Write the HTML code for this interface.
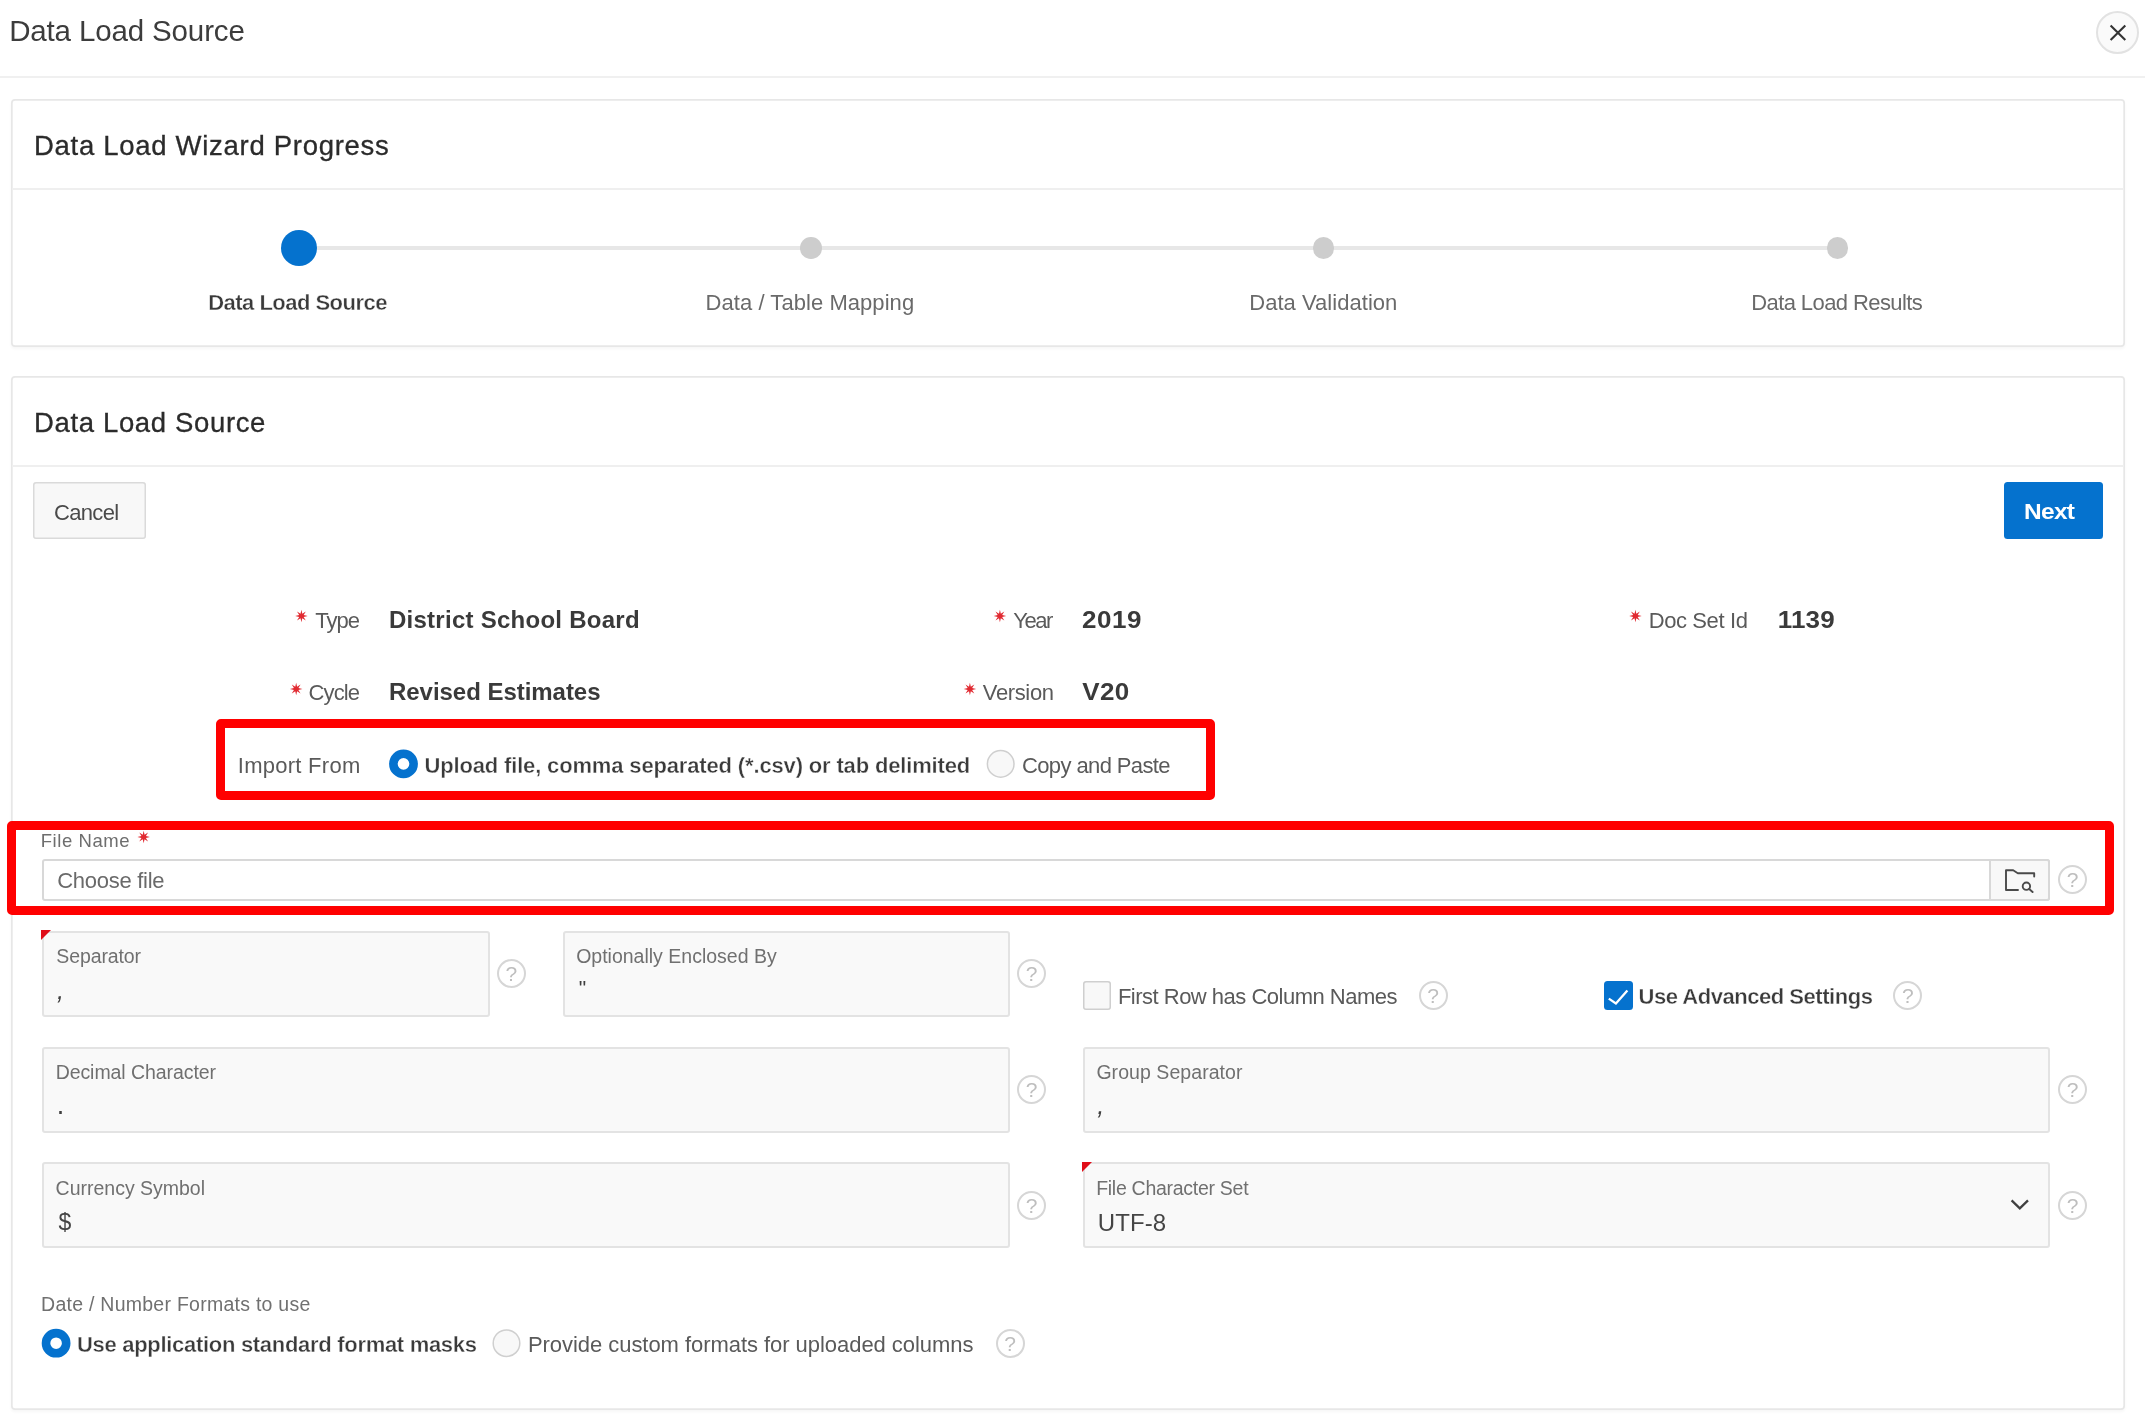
<!DOCTYPE html>
<html lang="en">
<head>
<meta charset="utf-8">
<title>Data Load Source</title>
<style>
html,body{margin:0;padding:0;background:#fff;}
body{width:2145px;height:1423px;position:relative;overflow:hidden;font-family:"Liberation Sans",sans-serif;}
.t{position:absolute;margin:0;padding:0;white-space:pre;line-height:1;font-family:"Liberation Sans",sans-serif;}
.abs{position:absolute;box-sizing:border-box;}
.card{position:absolute;box-sizing:border-box;left:10.8px;width:2114.4px;border-radius:4px;background:#fff;box-shadow:inset 0 0 0 1.7px #e7e7e7,0 2px 3px rgba(0,0,0,.035);}
.hr{position:absolute;left:12px;width:2112px;height:2px;background:#efefef;}
.dot{position:absolute;width:21.6px;height:21.6px;border-radius:50%;background:#cdcdcd;}
.fld{position:absolute;box-sizing:border-box;height:86px;border:2px solid #e3e3e3;border-radius:3px;background:#f9f9f9;}
.help{position:absolute;box-sizing:border-box;width:29px;height:29px;border-radius:50%;border:2px solid #d6d6d6;background:#fff;color:#bebebe;font-size:21px;line-height:26.5px;text-align:center;}
.red{position:absolute;box-sizing:border-box;border:9px solid #ff0000;border-radius:5px;}
.red i{position:absolute;left:-1px;top:-1px;right:-1px;bottom:-1px;border:1px solid #ff0000;}
.corner{position:absolute;width:0;height:0;border-top:10.5px solid #e00d18;border-right:10.5px solid transparent;}
</style>
</head>
<body>
<div id="page" style="position:absolute;left:0;top:0;width:2145px;height:1423px;will-change:transform">
<!-- dialog title bar -->
<div class="abs" style="left:0;top:75.8px;width:2145px;height:2px;background:#f0f0f0"></div>
<div class="abs" style="left:2096.3px;top:11.1px;width:43px;height:43px;border-radius:50%;border:2px solid #e2e2e2;background:#fafafa"></div>
<svg class="abs" style="left:2108px;top:23px" width="20" height="20" viewBox="0 0 20 20"><path d="M2.6 2.4 L17.3 17.1 M17.3 2.4 L2.6 17.1" stroke="#333" stroke-width="2.1" fill="none" stroke-linecap="butt"/></svg>

<!-- card 1 : wizard progress -->
<div class="card" style="top:99.2px;height:248.3px"></div>
<div class="hr" style="top:188px"></div>
<div class="abs" style="left:298px;top:246px;width:1539px;height:3.6px;background:#e7e7e7"></div>
<div class="abs" style="left:280.7px;top:229.7px;width:36.3px;height:36.3px;border-radius:50%;background:#0572ce"></div>
<div class="dot" style="left:800.3px;top:237.2px"></div>
<div class="dot" style="left:1312.5px;top:237.2px"></div>
<div class="dot" style="left:1826.6px;top:237.2px"></div>

<!-- card 2 : data load source -->
<div class="card" style="top:376.2px;height:1034px"></div>
<div class="hr" style="top:465px"></div>

<!-- buttons -->
<div class="abs" style="left:33px;top:482px;width:113px;height:57px;box-shadow:inset 0 0 0 1.5px #dadada;border-radius:3px;background:#f8f8f8"></div>
<div class="abs" style="left:2004px;top:481.6px;width:99.2px;height:57.6px;border-radius:3.5px;background:#0572ce"></div>

<!-- import-from radios -->
<svg class="abs" style="left:386px;top:746px" width="34" height="34" viewBox="0 0 34 34"><circle cx="17.5" cy="17.9" r="10.1" fill="none" stroke="#0572ce" stroke-width="8.6"/></svg>
<svg class="abs" style="left:983px;top:746px" width="34" height="34" viewBox="0 0 34 34"><circle cx="17.7" cy="17.9" r="13.3" fill="#f8f8f8" stroke="#cfcfcf" stroke-width="1.5"/></svg>

<!-- file name input -->
<div class="abs" style="left:42px;top:858.6px;width:2008px;height:42.6px;border:2px solid #d8d8d8;border-radius:3px;background:#fff"></div>
<div class="abs" style="left:1989.4px;top:858.6px;width:60.6px;height:42.6px;border:2px solid #d8d8d8;border-radius:0 3px 3px 0;background:#f8f8f8"></div>
<svg class="abs" style="left:2002px;top:866px" width="36" height="30" viewBox="0 0 36 30"><g fill="none" stroke="#4a4a4a" stroke-width="1.9" stroke-linejoin="round" stroke-linecap="round"><path d="M16 24 H4 V4.3 H11.2 L15.8 7.2 H32.2 V10.6"/><circle cx="24.4" cy="20.2" r="3.7"/><path d="M27.2 23 L30.6 26"/></g></svg>
<div class="help" style="left:2058.1px;top:865.2px">?</div>

<!-- row: separator / enclosed by / checkboxes -->
<div class="fld" style="left:42px;top:930.6px;width:448.2px"></div>
<div class="corner" style="left:41.4px;top:930px"></div>
<div class="help" style="left:496.8px;top:959.2px">?</div>
<div class="fld" style="left:563.2px;top:930.6px;width:446.6px"></div>
<div class="help" style="left:1017.1px;top:959.2px">?</div>
<div class="abs" style="left:1083px;top:981px;width:28px;height:29px;box-shadow:inset 0 0 0 1.5px #cfcfcf;border-radius:3px;background:#f8f8f8"></div>
<div class="help" style="left:1418.7px;top:981px">?</div>
<div class="abs" style="left:1603.9px;top:981.2px;width:29px;height:28.8px;border-radius:3.5px;background:#0572ce"></div>
<svg class="abs" style="left:1603.9px;top:981.2px" width="29" height="29" viewBox="0 0 29 29"><path d="M4.8 17.6 L11.9 22.4 L23.4 9.6" fill="none" stroke="#fff" stroke-width="2.3" stroke-linecap="butt" stroke-linejoin="miter"/></svg>
<div class="help" style="left:1893.4px;top:981px">?</div>

<!-- row: decimal / group -->
<div class="fld" style="left:42px;top:1047.4px;width:967.8px"></div>
<div class="help" style="left:1017.1px;top:1075.3px">?</div>
<div class="fld" style="left:1082.7px;top:1047.4px;width:967.6px"></div>
<div class="help" style="left:2058.1px;top:1075.3px">?</div>

<!-- row: currency / charset -->
<div class="fld" style="left:42px;top:1162.4px;width:967.8px"></div>
<div class="help" style="left:1017.1px;top:1190.9px">?</div>
<div class="fld" style="left:1082.7px;top:1162.4px;width:967.6px"></div>
<div class="corner" style="left:1082.1px;top:1161.8px"></div>
<svg class="abs" style="left:2008px;top:1196px" width="24" height="16" viewBox="0 0 24 16"><path d="M3.6 4.4 L11.8 12.4 L20 4.4" fill="none" stroke="#404040" stroke-width="2.3" stroke-linecap="butt" stroke-linejoin="miter"/></svg>
<div class="help" style="left:2058.1px;top:1190.9px">?</div>

<!-- date/number radios -->
<svg class="abs" style="left:39px;top:1326px" width="34" height="34" viewBox="0 0 34 34"><circle cx="17.1" cy="17.2" r="10.1" fill="none" stroke="#0572ce" stroke-width="8.6"/></svg>
<svg class="abs" style="left:489px;top:1326px" width="34" height="34" viewBox="0 0 34 34"><circle cx="17.5" cy="17.2" r="13.3" fill="#f8f8f8" stroke="#cfcfcf" stroke-width="1.5"/></svg>
<div class="help" style="left:995.5px;top:1328.7px">?</div>

<!-- red highlight boxes -->
<div class="red" style="left:216px;top:719px;width:999.2px;height:81px"></div>
<div class="red" style="left:7px;top:821px;width:2107px;height:94px"></div>

<!-- text -->
<h1 class="t" style="left:9.13px;top:16px;font-size:29.5px;font-weight:400;color:#3c3c3c;letter-spacing:-0.139px;">Data Load Source</h1>
<h2 class="t" style="left:33.98px;top:132px;font-size:27.5px;font-weight:400;color:#2b2b2b;letter-spacing:0.711px;-webkit-text-stroke:0.3px #2b2b2b;">Data Load Wizard Progress</h2>
<span class="t" style="left:208.20px;top:292px;font-size:22px;font-weight:700;color:#3a3a3a;letter-spacing:-0.518px;-webkit-text-stroke:0.35px #fff;">Data Load Source</span>
<span class="t" style="left:705.53px;top:292px;font-size:22px;font-weight:400;color:#6a6a6a;letter-spacing:0.059px;">Data / Table Mapping</span>
<span class="t" style="left:1249.23px;top:292px;font-size:22px;font-weight:400;color:#6a6a6a;letter-spacing:0.039px;">Data Validation</span>
<span class="t" style="left:1751.23px;top:292px;font-size:22px;font-weight:400;color:#6a6a6a;letter-spacing:-0.589px;">Data Load Results</span>
<h2 class="t" style="left:33.98px;top:409px;font-size:27.5px;font-weight:400;color:#2b2b2b;letter-spacing:0.649px;-webkit-text-stroke:0.3px #2b2b2b;">Data Load Source</h2>
<span class="t" style="left:53.97px;top:502px;font-size:22px;font-weight:400;color:#4a4a4a;letter-spacing:-0.667px;">Cancel</span>
<span class="t" style="left:2024.04px;top:499px;font-size:24.5px;font-weight:700;color:#ffffff;letter-spacing:-0.708px;transform-origin:0 20px;transform:scaleY(0.9007);">Next</span>
<label class="t" style="left:315.27px;top:610px;font-size:22px;font-weight:400;color:#5a5a5a;letter-spacing:-0.958px;">Type</label>
<span class="t" style="left:388.97px;top:608px;font-size:24px;font-weight:700;color:#3a3a3a;letter-spacing:0.264px;">District School Board</span>
<label class="t" style="left:1013.23px;top:610px;font-size:22px;font-weight:400;color:#5a5a5a;letter-spacing:-1.434px;">Year</label>
<span class="t" style="left:1082.07px;top:606px;font-size:26px;font-weight:700;color:#3a3a3a;letter-spacing:0.520px;transform-origin:0 22px;transform:scaleY(0.9132);">2019</span>
<label class="t" style="left:1648.63px;top:610px;font-size:22px;font-weight:400;color:#5a5a5a;letter-spacing:-0.384px;">Doc Set Id</label>
<span class="t" style="left:1777.74px;top:606px;font-size:26px;font-weight:700;color:#3a3a3a;letter-spacing:0.196px;transform-origin:0 22px;transform:scaleY(0.9132);">1139</span>
<label class="t" style="left:308.57px;top:682px;font-size:22px;font-weight:400;color:#5a5a5a;letter-spacing:-0.910px;">Cycle</label>
<span class="t" style="left:388.97px;top:680px;font-size:24px;font-weight:700;color:#3a3a3a;letter-spacing:-0.035px;">Revised Estimates</span>
<label class="t" style="left:982.84px;top:682px;font-size:22px;font-weight:400;color:#5a5a5a;letter-spacing:-0.369px;">Version</label>
<span class="t" style="left:1082.19px;top:678px;font-size:26px;font-weight:700;color:#3a3a3a;letter-spacing:0.441px;transform-origin:0 22px;transform:scaleY(0.9132);">V20</span>
<label class="t" style="left:237.79px;top:755px;font-size:22px;font-weight:400;color:#5a5a5a;letter-spacing:0.265px;">Import From</label>
<span class="t" style="left:424.42px;top:755px;font-size:22px;font-weight:700;color:#3a3a3a;letter-spacing:-0.153px;-webkit-text-stroke:0.35px #fff;">Upload file, comma separated (*.csv) or tab delimited</span>
<label class="t" style="left:1021.97px;top:755px;font-size:22px;font-weight:400;color:#5a5a5a;letter-spacing:-0.611px;">Copy and Paste</label>
<label class="t" style="left:40.76px;top:832px;font-size:18.5px;font-weight:400;color:#6e6e6e;letter-spacing:0.554px;">File Name</label>
<span class="t" style="left:57.27px;top:870px;font-size:22px;font-weight:400;color:#6a6a6a;letter-spacing:-0.282px;">Choose file</span>
<label class="t" style="left:56.36px;top:947px;font-size:19.5px;font-weight:400;color:#707070;letter-spacing:-0.129px;">Separator</label>
<label class="t" style="left:576.13px;top:947px;font-size:19.5px;font-weight:400;color:#707070;letter-spacing:0.004px;">Optionally Enclosed By</label>
<label class="t" style="left:1117.93px;top:986px;font-size:22px;font-weight:400;color:#5a5a5a;letter-spacing:-0.506px;">First Row has Column Names</label>
<span class="t" style="left:1638.52px;top:986px;font-size:22px;font-weight:700;color:#3a3a3a;letter-spacing:-0.467px;-webkit-text-stroke:0.35px #fff;">Use Advanced Settings</span>
<label class="t" style="left:55.67px;top:1063px;font-size:19.5px;font-weight:400;color:#707070;letter-spacing:-0.070px;">Decimal Character</label>
<label class="t" style="left:1096.39px;top:1063px;font-size:19.5px;font-weight:400;color:#707070;letter-spacing:0.061px;">Group Separator</label>
<label class="t" style="left:55.59px;top:1179px;font-size:19.5px;font-weight:400;color:#707070;letter-spacing:-0.008px;">Currency Symbol</label>
<label class="t" style="left:1096.17px;top:1179px;font-size:19.5px;font-weight:400;color:#707070;letter-spacing:-0.279px;">File Character Set</label>
<span class="t" style="left:1097.69px;top:1211px;font-size:24px;font-weight:400;color:#454545;letter-spacing:0.116px;">UTF-8</span>
<span class="t" style="left:58.52px;top:1211px;font-size:23px;font-weight:400;color:#454545;letter-spacing:0.000px;">$</span>
<label class="t" style="left:41.07px;top:1295px;font-size:19.5px;font-weight:400;color:#707070;letter-spacing:0.259px;">Date / Number Formats to use</label>
<span class="t" style="left:77.02px;top:1334px;font-size:22px;font-weight:700;color:#3a3a3a;letter-spacing:-0.301px;-webkit-text-stroke:0.35px #fff;">Use application standard format masks</span>
<label class="t" style="left:527.93px;top:1334px;font-size:22px;font-weight:400;color:#5a5a5a;letter-spacing:-0.048px;">Provide custom formats for uploaded columns</label>
<span class="t" style="left:56.9px;top:978px;font-family:'Liberation Sans',sans-serif;font-size:25px;font-weight:400;color:#3f3f3f;font-style:italic;">,</span>
<span class="t" style="left:578.8px;top:977px;font-family:'Liberation Sans',sans-serif;font-size:21px;font-weight:400;color:#3f3f3f;">&quot;</span>
<span class="t" style="left:56.7px;top:1092px;font-family:'Liberation Sans',sans-serif;font-size:27px;font-weight:400;color:#3f3f3f;">.</span>
<span class="t" style="left:1097.3px;top:1093px;font-family:'Liberation Sans',sans-serif;font-size:25px;font-weight:400;color:#3f3f3f;font-style:italic;">,</span>
<span class="t" style="left:294.4px;top:609px;font-family:'DejaVu Sans','Liberation Sans',sans-serif;font-size:16.5px;font-weight:400;color:#e12a31;">✷</span>
<span class="t" style="left:993.0px;top:609px;font-family:'DejaVu Sans','Liberation Sans',sans-serif;font-size:16.5px;font-weight:400;color:#e12a31;">✷</span>
<span class="t" style="left:1628.4px;top:609px;font-family:'DejaVu Sans','Liberation Sans',sans-serif;font-size:16.5px;font-weight:400;color:#e12a31;">✷</span>
<span class="t" style="left:289.3px;top:682px;font-family:'DejaVu Sans','Liberation Sans',sans-serif;font-size:16.5px;font-weight:400;color:#e12a31;">✷</span>
<span class="t" style="left:962.9px;top:682px;font-family:'DejaVu Sans','Liberation Sans',sans-serif;font-size:16.5px;font-weight:400;color:#e12a31;">✷</span>
<span class="t" style="left:136.8px;top:830px;font-family:'DejaVu Sans','Liberation Sans',sans-serif;font-size:16.5px;font-weight:400;color:#e12a31;">✷</span>
</div>
</body>
</html>
